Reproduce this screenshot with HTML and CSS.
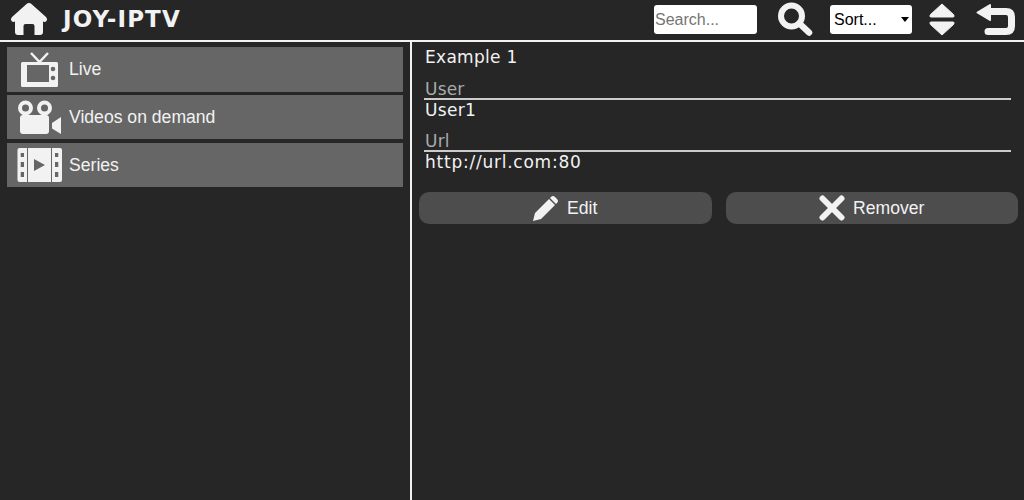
FILE: index.html
```html
<!DOCTYPE html>
<html lang="en">
<head>
<meta charset="utf-8">
<title>JOY-IPTV</title>
<link rel="stylesheet" href="styles.css">
</head>
<body>
<header class="topbar">
  <svg class="home" viewBox="0 0 38 34"><path d="M19 1 Q20.500 1 22 2.400 L36 15 Q38 17 36.500 19 Q35 20.600 33 19.600 L33 30 Q33 33 30 33 L24.500 33 L24.500 24 Q24.500 22 22.500 22 L15.500 22 Q13.500 22 13.500 24 L13.500 33 L8 33 Q5 33 5 30 L5 19.600 Q3 20.600 1.500 19 Q0 17 2 15 L16 2.400 Q17.500 1 19 1Z" fill="#f2f2f2"/></svg>
  <h1 class="brand">JOY-IPTV</h1>
  <div class="tools">
    <input class="search" type="text" placeholder="Search...">
    <svg class="icon-search" viewBox="0 0 36 34"><circle cx="14.500" cy="14" r="10.500" fill="none" stroke="#f2f2f2" stroke-width="6"/><path d="M23 22 L32 30.500" stroke="#f2f2f2" stroke-width="6.500" stroke-linecap="round"/></svg>
    <div class="sort-wrap"><select class="sort"><option>Sort...</option></select></div>
    <svg class="icon-order" viewBox="0 0 28 34"><path d="M14 2 L25.500 12.500 Q27 15 25 15 L3 15 Q1 15 2.500 12.500Z M3 20 L25 20 Q27 20 25.500 22.500 L14 33 L2.500 22.500 Q1 20 3 20Z" fill="#f2f2f2" stroke="#f2f2f2" stroke-linejoin="round"/></svg>
    <svg class="icon-back" viewBox="0 0 40 34"><path d="M14 3 L1.500 10.500 L14 18Z" fill="#f2f2f2" stroke="#f2f2f2" stroke-width="2" stroke-linejoin="round"/><path d="M12 9.500 L30 9.500 Q35.500 9.500 35.500 15 L35.500 24 Q35.500 29.500 30 29.500 L12 29.500" fill="none" stroke="#f2f2f2" stroke-width="7" stroke-linecap="round"/></svg>
  </div>
</header>
<main class="panes">
  <nav class="menu">
    <a class="menu-item">
      <svg class="menu-icon" viewBox="0 0 45 37"><path d="M14 2 L22.500 11 L31 2" fill="none" stroke="#f2f2f2" stroke-width="2.500"/><path fill-rule="evenodd" d="M5.500 11 L39.500 11 Q41 11 41 12.500 L41 34.500 Q41 36 39.500 36 L5.500 36 Q4 36 4 34.500 L4 12.500 Q4 11 5.500 11Z M10 14 L10 31 L32 31 L32 14Z" fill="#f2f2f2"/><circle cx="36" cy="18" r="2.300" fill="#666"/><circle cx="36" cy="27" r="2.300" fill="#666"/></svg>
      <span>Live</span>
    </a>
    <a class="menu-item">
      <svg class="menu-icon" viewBox="0 0 45 37"><circle cx="8.500" cy="9" r="5.500" fill="none" stroke="#f2f2f2" stroke-width="4"/><circle cx="27.500" cy="9" r="5.500" fill="none" stroke="#f2f2f2" stroke-width="4"/><rect x="3" y="16" width="29" height="19" rx="3" fill="#f2f2f2"/><path d="M35 24 L44 18 L44 35 L35 29.500Z" fill="#f2f2f2"/></svg>
      <span>Videos on demand</span>
    </a>
    <a class="menu-item">
      <svg class="menu-icon" viewBox="0 0 45 37"><path fill-rule="evenodd" d="M2.500 1 L10 1 L10 35 L2.500 35 Q0.500 35 0.500 33 L0.500 3 Q0.500 1 2.500 1Z M3.700 6 L3.700 10 L7 10 L7 6Z M3.700 15 L3.700 20 L7 20 L7 15Z M3.700 25 L3.700 30 L7 30 L7 25Z" fill="#f2f2f2"/><path fill-rule="evenodd" d="M11 1 L34 1 L34 35 L11 35Z M17 12 L17 24 L28 18Z" fill="#f2f2f2"/><path fill-rule="evenodd" d="M35 1 L43 1 Q45 1 45 3 L45 33 Q45 35 43 35 L35 35Z M38 6 L38 10 L41.300 10 L41.300 6Z M38 15 L38 20 L41.300 20 L41.300 15Z M38 25 L38 30 L41.300 30 L41.300 25Z" fill="#f2f2f2"/></svg>
      <span>Series</span>
    </a>
  </nav>
  <section class="detail">
    <h2 class="name">Example 1</h2>
    <div class="field">
      <div class="label">User</div>
      <div class="value">User1</div>
    </div>
    <div class="field">
      <div class="label">Url</div>
      <div class="value value-url">http://url.com:80</div>
    </div>
    <div class="actions">
      <button class="action" type="button">
        <svg class="action-icon" viewBox="0 0 26 26"><path d="M0 26 L2 18 L16 4 L22 10 L8 24Z M18 2 Q20 0 22 2 L24 4 Q26 6 24 8 L23 9 L17 3Z" fill="#f2f2f2"/></svg>
        <span>Edit</span>
      </button>
      <button class="action" type="button">
        <svg class="action-icon" viewBox="0 0 26 26"><path d="M3.500 3.500 L22.500 22.500 M22.500 3.500 L3.500 22.500" stroke="#f2f2f2" stroke-width="6" stroke-linecap="round"/></svg>
        <span>Remover</span>
      </button>
    </div>
  </section>
</main>
</body>
</html>
```
FILE: styles.css
```css
* { box-sizing: border-box; }
html, body { height: 100%; }
body {
  margin: 0;
  background: #262626;
  color: #f2f2f2;
  font-family: "Liberation Sans", Arial, sans-serif;
  display: flex;
  flex-direction: column;
  overflow: hidden;
}
.topbar {
  height: 42px;
  flex: none;
  display: flex;
  align-items: center;
  padding: 0 8px 2px 10px;
  border-bottom: 2px solid #f2f2f2;
}
.home { width: 38px; height: 34px; flex: none; }
.brand {
  margin: 0 0 0 15px;
  font: bold 23px "DejaVu Sans", Verdana, sans-serif;
  letter-spacing: 1.100px;
  color: #f2f2f2;
}
.tools { margin-left: auto; display: flex; align-items: center; }
.search {
  width: 103px;
  height: 29px;
  border: 0;
  border-radius: 3px;
  padding: 1px 1px 0;
  background: #fff;
  font: 16px "Liberation Sans", Arial, sans-serif;
}
.search::placeholder { color: #757575; }
.icon-search { width: 36px; height: 34px; margin-left: 20px; }
.sort-wrap { position: relative; margin-left: 17px; }
.sort-wrap::after {
  content: "";
  position: absolute;
  right: 3px;
  top: 12px;
  border: 4px solid transparent;
  border-top: 5px solid #000;
  border-bottom: 0;
}
.sort {
  display: block;
  appearance: none;
  width: 82px;
  height: 29px;
  border: 0;
  border-radius: 3px;
  padding: 1px 4px 0 4px;
  background: #fff;
  color: #000;
  font: 16px "Liberation Sans", Arial, sans-serif;
}
.icon-order { width: 28px; height: 34px; margin-left: 16px; }
.icon-back { width: 40px; height: 34px; margin-left: 20px; }
.panes { flex: 1; display: flex; min-height: 0; }
.menu {
  width: 412px;
  flex: none;
  padding: 5px 7px 0;
  border-right: 2px solid #f2f2f2;
  display: flex;
  flex-direction: column;
  gap: 3.300px;
}
.menu-item {
  height: 44.500px;
  width: 396px;
  background: #666;
  display: flex;
  align-items: center;
  gap: 7px;
  padding-left: 10px;
  padding-top: 0.600px;
  font-size: 17.600px;
  color: #f2f2f2;
}
.menu-icon { width: 45px; height: 37px; flex: none; }
.detail { flex: 1; padding: 5px 7px 0 7px; font-family: "DejaVu Sans", Verdana, sans-serif; }
.name { margin: 0 0 0 6px; font-size: 17px; letter-spacing: 0.300px; font-weight: normal; line-height: 21px; }
.field { margin-left: 5px; margin-right: 6px; }
.label {
  margin-top: 12px;
  padding-left: 1px;
  color: #aaa;
  font-size: 17px;
  letter-spacing: 0.200px;
  line-height: 18px;
  border-bottom: 2px solid #ccc;
}
.value { padding-left: 1px; font-size: 17px; letter-spacing: 0.300px; line-height: 21px; }
.value-url { letter-spacing: 0.760px; }
.field + .field .label { margin-top: 11px; }
.actions { display: flex; gap: 14px; margin-top: 19px; margin-right: -1px; }
.action {
  flex: 1;
  height: 32px;
  border: 0;
  border-radius: 10px;
  background: #4d4d4d;
  color: #f2f2f2;
  font: 17.600px "Liberation Sans", Arial, sans-serif;
  display: flex;
  align-items: center;
  justify-content: center;
  gap: 8px;
}
.action-icon { width: 26px; height: 26px; flex: none; }
```
